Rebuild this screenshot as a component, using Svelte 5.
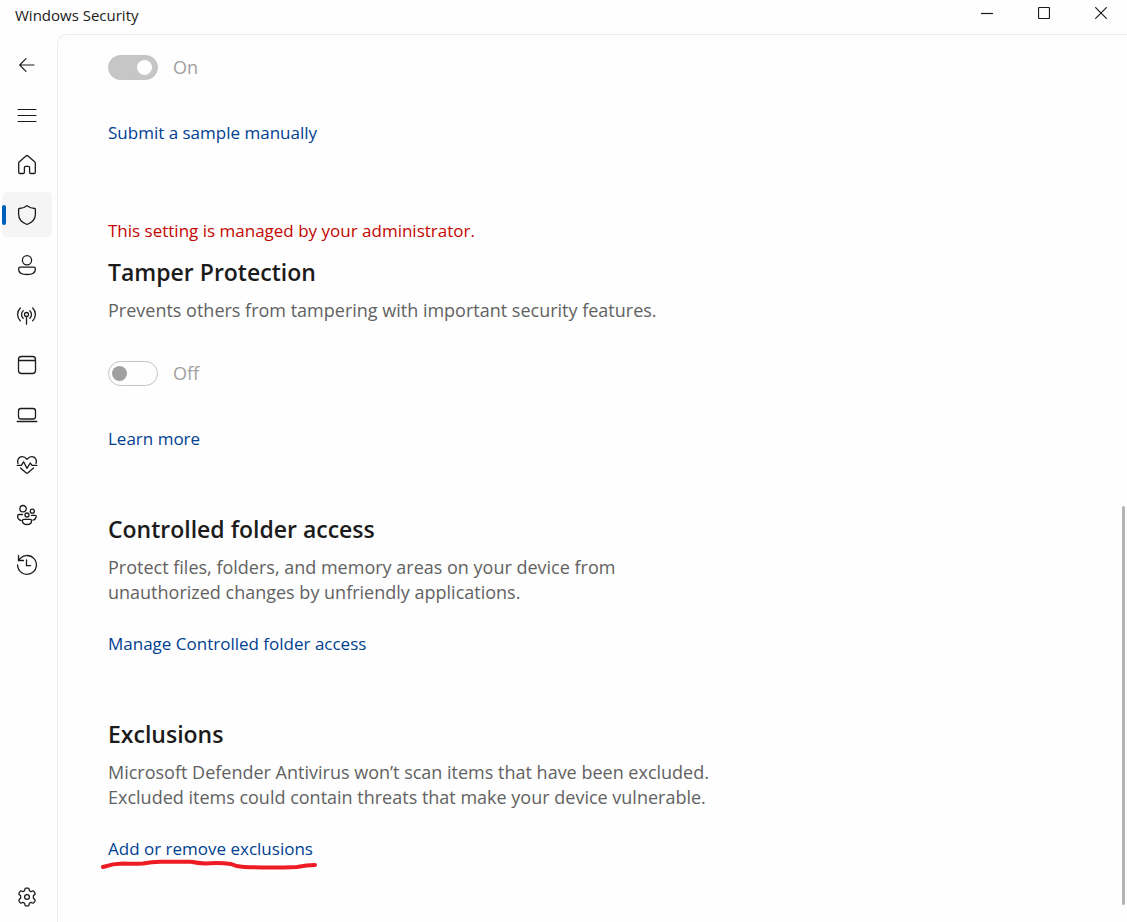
<script>
  const navItems = [
    {
      label: 'Back',
      thin: true,
      paths: ['M34 25H20.200M26 18.700L19.700 25L26 31.300']
    },
    {
      label: 'Open navigation',
      thin: true,
      paths: ['M18 19.500H36M18 25.500H36M18 31.500H36']
    },
    {
      label: 'Home',
      paths: [
        'M18.700 23.200Q18.700 22.300 19.400 21.700L26 15.900Q27 15.100 28 15.900L34.600 21.700Q35.300 22.300 35.300 23.200V32.200Q35.300 33.500 34 33.500H30.800Q29.600 33.500 29.600 32.300V27.500Q29.600 26.400 28.500 26.400H25.500Q24.400 26.400 24.400 27.500V32.300Q24.400 33.500 23.200 33.500H20Q18.700 33.500 18.700 32.200Z'
      ]
    },
    {
      label: 'Virus & threat protection',
      active: true,
      paths: [
        'M27 15.700Q30.500 18.300 34.700 18.500Q35.400 18.600 35.400 19.300V24.300Q35.400 31.500 27 34.500Q18.600 31.500 18.600 24.300V19.300Q18.600 18.600 19.300 18.500Q23.500 18.300 27 15.700Z'
      ]
    },
    {
      label: 'Account protection',
      paths: [
        'M31.600 20.300A4.600 4.600 0 1 1 22.400 20.300A4.600 4.600 0 1 1 31.600 20.300Z',
        'M20.300 27.200H33.700Q35.400 27.200 35.400 28.900C35.400 32.500 31.800 34.500 27 34.500C22.200 34.500 18.600 32.500 18.600 28.900Q18.600 27.200 20.300 27.200Z'
      ]
    },
    {
      label: 'Firewall & network protection',
      paths: [
        'M28.500 24.500A2 2 0 1 1 24.500 24.500A2 2 0 1 1 28.500 24.500ZM26.500 26.500V34.200',
        'M20.300 18Q17.600 20.700 17.600 24.400Q17.600 28.100 20.300 30.800M32.700 18Q35.400 20.700 35.400 24.400Q35.400 28.100 32.700 30.800M23.200 20.800Q21.500 22.400 21.500 24.400Q21.500 26.600 23.200 28.200M29.800 20.800Q31.500 22.400 31.500 24.400Q31.500 26.600 29.800 28.200'
      ]
    },
    {
      label: 'App & browser control',
      paths: [
        'M21.500 16.500H32.500Q35.500 16.500 35.500 19.500V30.500Q35.500 33.500 32.500 33.500H21.500Q18.500 33.500 18.500 30.500V19.500Q18.500 16.500 21.500 16.500ZM18.500 20.500H35.500'
      ]
    },
    {
      label: 'Device security',
      paths: [
        'M21 18.500H33Q35.500 18.500 35.500 21V26.500Q35.500 29 33 29H21Q18.500 29 18.500 26.500V21Q18.500 18.500 21 18.500ZM17.200 31.500H36.800'
      ]
    },
    {
      label: 'Device performance & health',
      paths: [
        'M18 23.400C16.700 19.900 19 16.600 22.200 16.600C24.300 16.600 25.700 17.700 27 19.200C28.300 17.700 29.700 16.600 31.800 16.600C35 16.600 37.300 19.900 36 23.400',
        'M17.200 25.400H21.300L23.600 21.800L27 28.400L30.200 23L32 25.400H36.800M20.500 28L26.300 33.100Q27 33.700 27.700 33.100L33.500 28'
      ]
    },
    {
      label: 'Family options',
      paths: [
        'M26.300 18.700A3.200 3.200 0 1 1 19.900 18.700A3.200 3.200 0 1 1 26.300 18.700ZM34.300 21.200A2 2 0 1 1 30.300 21.200A2 2 0 1 1 34.300 21.200ZM29 25A2 2 0 1 1 25 25A2 2 0 1 1 29 25Z',
        'M22.500 24.500H19Q17.600 24.500 17.600 26C17.600 28.500 19 30 21 30.500M31.500 25.400H35Q36.400 25.400 36.200 27Q35.600 29.500 33 30.200M23.600 29.300H30.400Q31.600 29.300 31.600 30.400C31.600 33 29.700 34.500 27 34.500C24.300 34.500 22.400 33 22.400 30.400Q22.400 29.300 23.600 29.300Z'
      ]
    },
    {
      label: 'Protection history',
      paths: ['M18.700 20.500A9.400 9.400 0 1 1 17.600 25M18.500 15.500V20.500H23.500M26.500 20V25.700H30.500']
    }
  ];
</script>

<div class="window">
  <header>
    <h1>Windows Security</h1>
    <div class="controls">
      <button aria-label="Minimize"><svg viewBox="0 0 12 12"><path d="M0 6.500H12" /></svg></button>
      <button aria-label="Maximize"><svg viewBox="0 0 12 12"><rect x=".5" y=".5" width="11" height="11" rx="1" /></svg></button>
      <button aria-label="Close"><svg viewBox="0 0 12 12"><path d="M.3.3L11.700 11.700M11.700.3L.3 11.700" /></svg></button>
    </div>
  </header>

  <div class="body">
    <nav aria-label="Main">
      {#each navItems as item}
        <button class="item" class:active={item.active} class:thin={item.thin} aria-label={item.label}>
          <svg viewBox="2 2 50 45">
            {#each item.paths as d}<path {d} />{/each}
          </svg>
        </button>
      {/each}
      <button class="item settings" aria-label="Settings">
        <svg viewBox="2 2 50 45">
          <path
            d="M24.600 18.700L25 16.900Q25.200 16.100 26 16.100H28Q28.800 16.100 29 16.900L29.400 18.700L31 19.600L32.800 19Q33.600 18.800 34 19.500L35 21.200Q35.400 22 34.800 22.500L33.400 23.800V26.200L34.800 27.500Q35.400 28 35 28.800L34 30.500Q33.600 31.200 32.800 31L31 30.400L29.400 31.300L29 33.100Q28.800 33.900 28 33.900H26Q25.200 33.900 25 33.100L24.600 31.300L23 30.400L21.200 31Q20.400 31.200 20 30.500L19 28.800Q18.600 28 19.200 27.500L20.600 26.200V23.800L19.200 22.500Q18.600 22 19 21.200L20 19.500Q20.400 18.800 21.200 19L23 19.600Z"
          />
          <circle cx="27" cy="25" r="2.400" />
        </svg>
      </button>
    </nav>

    <main>
      <section>
        <label class="toggle"><input type="checkbox" role="switch" checked disabled />On</label>
        <a class="after-toggle" href="#sample">Submit a sample manually</a>
      </section>

      <section class="managed">
        <p class="notice">This setting is managed by your administrator.</p>
        <h2>Tamper Protection</h2>
        <p class="description">Prevents others from tampering with important security features.</p>
        <label class="toggle"><input type="checkbox" role="switch" disabled />Off</label>
        <a class="after-toggle" href="#tamper">Learn more</a>
      </section>

      <section>
        <h2>Controlled folder access</h2>
        <p class="description">
          Protect files, folders, and memory areas on your device from unauthorized changes by
          unfriendly applications.
        </p>
        <a href="#folders">Manage Controlled folder access</a>
      </section>

      <section>
        <h2>Exclusions</h2>
        <p class="description">
          Microsoft Defender Antivirus won’t scan items that have been excluded. Excluded items could
          contain threats that make your device vulnerable.
        </p>
        <a class="marked" href="#exclusions">
          Add or remove exclusions
          <svg class="stroke" viewBox="0 0 216 12" aria-hidden="true">
            <path d="M2 8Q12 4.500 22 4.500Q32 5 42 4.500Q52 2.500 62 2.800H90Q97 4.200 104 4.500Q118 3.500 130 5Q136 8 143 8Q170 9 196 8Q206 6 214 6" />
          </svg>
        </a>
      </section>
      <div class="scrollbar"></div>
    </main>
  </div>
</div>

<style>
  :global(body) {
    margin: 0;
    background: #fefefe;
  }
  .window {
    display: flex;
    flex-direction: column;
    min-height: 100vh;
    color: #1b1b1b;
    font-family: 'Segoe UI', 'Open Sans', 'Noto Sans', sans-serif;
    font-size: 17px;
    line-height: 25px;
  }
  header {
    display: flex;
    justify-content: space-between;
    height: 34px;
  }
  h1 {
    margin: 0;
    padding: 4px 15px;
    font-size: 15px;
    font-weight: 400;
    line-height: 22px;
  }
  button {
    padding: 0;
    border: 0;
    background: none;
    color: inherit;
  }
  svg {
    display: block;
    fill: none;
    stroke: currentColor;
    stroke-linejoin: round;
  }
  .controls {
    display: flex;
    gap: 5px;
  }
  .controls button {
    display: grid;
    place-items: center;
    width: 52px;
    height: 26px;
  }
  .controls svg {
    width: 12px;
    height: 12px;
    stroke-width: 1.2;
  }
  .body {
    display: flex;
    flex: 1;
  }
  nav {
    display: flex;
    flex-direction: column;
    gap: 5px;
    box-sizing: border-box;
    width: 57px;
    padding: 8px 5px 3px 2px;
  }
  .item {
    position: relative;
    height: 45px;
    border-radius: 5px;
  }
  .item svg {
    width: 50px;
    height: 45px;
    stroke-width: 1.3;
    stroke-linecap: round;
  }
  .thin svg {
    stroke-width: 1.1;
  }
  .active {
    background: #f5f5f5;
  }
  .active::before {
    position: absolute;
    top: 13px;
    left: 0;
    width: 4px;
    height: 20px;
    border-radius: 2px;
    background: #005fb8;
    content: '';
  }
  .settings {
    margin-top: auto;
  }
  main {
    position: relative;
    display: flex;
    flex: 1;
    flex-direction: column;
    gap: 62px;
    padding: 20px 50px;
    border-top: 1px solid #ececec;
    border-left: 1px solid #ececec;
    border-top-left-radius: 10px;
  }
  section {
    display: flex;
    flex-direction: column;
    align-items: flex-start;
  }
  .managed {
    padding-top: 11px;
  }
  h2,
  p {
    margin: 0;
  }
  h2 {
    margin-bottom: 10px;
    font-size: 23px;
    font-weight: 600;
    line-height: 32px;
  }
  .notice {
    margin-bottom: 13px;
    color: #c50500;
  }
  .description {
    max-width: 612px;
    color: #626262;
    font-size: 18px;
  }
  a {
    margin-top: 26px;
    color: #003e92;
    text-decoration: none;
  }
  .after-toggle {
    margin-top: 40px;
  }
  .toggle {
    display: flex;
    align-items: center;
    gap: 15px;
    height: 25px;
    color: #a0a0a0;
    font-size: 18px;
  }
  .description + .toggle {
    margin-top: 38px;
  }
  input {
    display: grid;
    align-items: center;
    box-sizing: border-box;
    width: 50px;
    height: 25px;
    margin: 0;
    padding: 0 3px;
    border: 1px solid #c4c4c4;
    border-radius: 13px;
    appearance: none;
  }
  input::before {
    width: 15px;
    height: 15px;
    border-radius: 50%;
    background: #a0a0a0;
    content: '';
  }
  input:checked {
    justify-items: end;
    padding-right: 5px;
    background: #c6c6c6;
  }
  input:checked::before {
    background: #fff;
  }
  .marked {
    position: relative;
  }
  .stroke {
    position: absolute;
    top: 23px;
    left: -7px;
    width: 216px;
    height: 12px;
    color: #ed1c24;
    stroke-width: 4;
    stroke-linecap: round;
  }
  .scrollbar {
    position: absolute;
    right: 2px;
    bottom: 17px;
    width: 3px;
    height: 45%;
    border-radius: 2px;
    background: #b4b4b4;
  }
</style>
